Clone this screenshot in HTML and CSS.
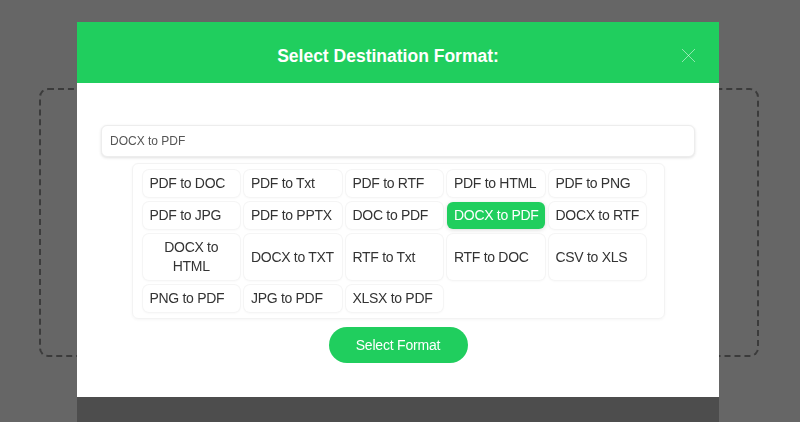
FILE: index.html
```html
<!DOCTYPE html>
<html lang="en">
<head>
    <meta charset="UTF-8">
    <meta name="viewport" content="width=device-width, initial-scale=1.0">
    <title>Select Destination Format</title>
    <link rel="stylesheet" href="styles.css">
</head>
<body>
    <div class="page">
        <div class="dropzone"></div>
    </div>

    <div class="overlay">
        <div class="modal">
            <div class="modal-header">
                <h2 class="modal-title">Select Destination Format:</h2>
                <button class="close-btn" aria-label="Close">
                    <svg width="15" height="15" viewBox="0 0 15 15">
                        <path d="M1 1 L14 14 M14 1 L1 14" stroke="currentColor" stroke-width="1" fill="none"/>
                    </svg>
                </button>
            </div>
            <div class="modal-body">
                <input type="text" class="search" value="DOCX to PDF">
                <div class="format-list">
                    <button class="format">PDF to DOC</button>
                    <button class="format">PDF to Txt</button>
                    <button class="format">PDF to RTF</button>
                    <button class="format">PDF to HTML</button>
                    <button class="format">PDF to PNG</button>
                    <button class="format">PDF to JPG</button>
                    <button class="format">PDF to PPTX</button>
                    <button class="format">DOC to PDF</button>
                    <button class="format active">DOCX to PDF</button>
                    <button class="format">DOCX to RTF</button>
                    <button class="format wrap">DOCX to<br>HTML</button>
                    <button class="format">DOCX to TXT</button>
                    <button class="format">RTF to Txt</button>
                    <button class="format">RTF to DOC</button>
                    <button class="format">CSV to XLS</button>
                    <button class="format">PNG to PDF</button>
                    <button class="format">JPG to PDF</button>
                    <button class="format">XLSX to PDF</button>
                </div>
                <div class="actions">
                    <button class="submit">Select Format</button>
                </div>
            </div>
        </div>
    </div>
</body>
</html>
```

FILE: styles.css
```css
* {
    box-sizing: border-box;
}
html, body {
    margin: 0;
    height: 100%;
    overflow: hidden;
}
body {
    font-family: 'Liberation Sans', Arial, sans-serif;
    background: #666666;
}
button, input {
    font-family: 'Liberation Sans', Arial, sans-serif;
}
.page {
    padding: 88px 2px 0 0;
    display: flex;
    justify-content: center;
}
.dropzone {
    width: 720px;
    height: 269px;
    border: 2px dashed #3b3b3b;
    border-radius: 9px;
}
.overlay {
    position: fixed;
    inset: 0;
    display: flex;
    justify-content: center;
    align-items: flex-start;
    padding: 22px 4px 0 0;
}
.modal {
    width: 642px;
    background: #fff;
    box-shadow: 0 40px 0 rgba(0, 0, 0, 0.24);
}
.modal-header {
    position: relative;
    height: 61px;
    background: #20ce5e;
    padding: 24px 20px 0 0;
    text-align: center;
}
.modal-title {
    margin: 0;
    font-size: 17.5px;
    line-height: 21px;
    font-weight: bold;
    color: #fff;
}
.close-btn {
    position: absolute;
    top: 26px;
    right: 23px;
    padding: 0;
    border: none;
    background: none;
    color: rgba(255, 255, 255, 0.5);
    cursor: pointer;
    line-height: 0;
}
.modal-body {
    padding: 42px 24px 34px 24px;
}
.search {
    display: block;
    width: 100%;
    height: 32px;
    padding: 0 8px;
    font-size: 12px;
    color: #555;
    border: 1px solid #ededed;
    border-radius: 6px;
    box-shadow: 0 1px 3px rgba(0, 0, 0, 0.12);
    outline: none;
}
.format-list {
    width: 533px;
    margin: 6px auto 0 auto;
    padding: 6px 10px;
    display: flex;
    flex-wrap: wrap;
    gap: 5px 4px;
    border: 1px solid #f3f3f3;
    border-radius: 6px;
    box-shadow: 0 1px 3px rgba(0, 0, 0, 0.04);
}
.format {
    width: 97.5px;
    padding: 4px 7px;
    font-size: 14px;
    letter-spacing: -0.3px;
    line-height: 19px;
    color: #333;
    text-align: left;
    white-space: nowrap;
    background: #fff;
    border: none;
    border-radius: 6px;
    box-shadow: 0 0 0 1px #f5f5f5, 0 1px 3px rgba(0, 0, 0, 0.05);
    cursor: pointer;
}
.format.wrap {
    text-align: center;
}
.format.active {
    background: #20ce5e;
    color: #fff;
    box-shadow: 0 1px 4px rgba(0, 0, 0, 0.15);
}
.actions {
    margin-top: 8px;
    text-align: center;
}
.submit {
    width: 139px;
    height: 36px;
    font-size: 14px;
    letter-spacing: -0.2px;
    color: #fff;
    background: #20ce5e;
    border: none;
    border-radius: 18px;
    cursor: pointer;
}
```
